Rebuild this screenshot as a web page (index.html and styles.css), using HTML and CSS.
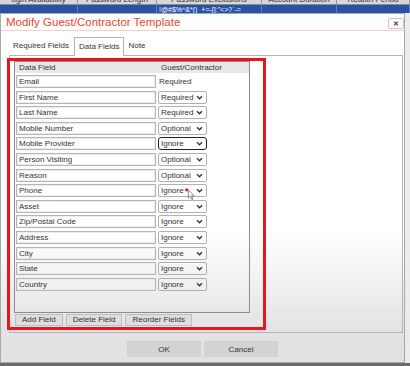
FILE: index.html
```html
<!DOCTYPE html>
<html lang="en">
<head>
    <meta charset="UTF-8">
    <title>Modify Guest/Contractor Template</title>
    <link rel="stylesheet" href="styles.css">
</head>
<body>
    <!-- Grid behind the dialog -->
    <div class="grid-strip">
        <div class="grid-head">
            <div class="col c1"><span>ogin Availability</span></div>
            <div class="col c2"><span>Password Length</span></div>
            <div class="col c3"><span>Password Exclusions</span></div>
            <div class="col c4"><span>Account Duration</span></div>
            <div class="col c5"><span>Reauth Period</span></div>
        </div>
        <div class="grid-row">
            <div class="col c1"></div>
            <div class="col c2"></div>
            <div class="col c3"><span>!@#$%^&amp;*()_+=-[]:"&lt;&gt;?`-=</span></div>
            <div class="col c4"></div>
            <div class="col c5"></div>
        </div>
    </div>

    <div class="dialog">
        <div class="dialog-title">
            <h1>Modify Guest/Contractor Template</h1>
            <button class="close-button">&#x2715;</button>
        </div>

        <div class="dialog-body">
            <div class="tabs">
                <div class="tab">Required Fields</div>
                <div class="tab active">Data Fields</div>
                <div class="tab">Note</div>
            </div>

            <div class="tab-panel">
                <div class="highlight">
                    <div class="field-list">
                        <div class="list-head">
                            <span class="head-name">Data Field</span>
                            <span class="head-mode">Guest/Contractor</span>
                        </div>
                        <div class="rows">
                            <div class="field-row">
                                <input class="field-name" type="text" value="Email">
                                <span class="fixed-mode">Required</span>
                            </div>
                            <div class="field-row">
                                <input class="field-name" type="text" value="First Name">
                                <div class="select">Required<svg class="chevron" viewBox="0 0 8 6"><path d="M1 1.5l3 3 3-3"/></svg></div>
                            </div>
                            <div class="field-row">
                                <input class="field-name" type="text" value="Last Name">
                                <div class="select">Required<svg class="chevron" viewBox="0 0 8 6"><path d="M1 1.5l3 3 3-3"/></svg></div>
                            </div>
                            <div class="field-row">
                                <input class="field-name" type="text" value="Mobile Number">
                                <div class="select">Optional<svg class="chevron" viewBox="0 0 8 6"><path d="M1 1.5l3 3 3-3"/></svg></div>
                            </div>
                            <div class="field-row">
                                <input class="field-name" type="text" value="Mobile Provider">
                                <div class="select focused">Ignore<svg class="chevron" viewBox="0 0 8 6"><path d="M1 1.5l3 3 3-3"/></svg></div>
                            </div>
                            <div class="field-row">
                                <input class="field-name" type="text" value="Person Visiting">
                                <div class="select">Optional<svg class="chevron" viewBox="0 0 8 6"><path d="M1 1.5l3 3 3-3"/></svg></div>
                            </div>
                            <div class="field-row">
                                <input class="field-name" type="text" value="Reason">
                                <div class="select">Optional<svg class="chevron" viewBox="0 0 8 6"><path d="M1 1.5l3 3 3-3"/></svg></div>
                            </div>
                            <div class="field-row">
                                <input class="field-name" type="text" value="Phone">
                                <div class="select">Ignore<svg class="chevron" viewBox="0 0 8 6"><path d="M1 1.5l3 3 3-3"/></svg>
                                    <!-- mouse pointer from the recording -->
                                    <svg class="pointer" viewBox="0 0 12 14">
                                        <circle cx="2" cy="2" r="2" fill="#e3202a"/>
                                        <path d="M4 2v10l2.4-2.3 1.8 4 1.4-.6-1.8-3.9H11z" fill="#ffffff" stroke="#555555" stroke-width=".8"/>
                                    </svg>
                                </div>
                            </div>
                            <div class="field-row">
                                <input class="field-name" type="text" value="Asset">
                                <div class="select">Ignore<svg class="chevron" viewBox="0 0 8 6"><path d="M1 1.5l3 3 3-3"/></svg></div>
                            </div>
                            <div class="field-row">
                                <input class="field-name" type="text" value="Zip/Postal Code">
                                <div class="select">Ignore<svg class="chevron" viewBox="0 0 8 6"><path d="M1 1.5l3 3 3-3"/></svg></div>
                            </div>
                            <div class="field-row">
                                <input class="field-name" type="text" value="Address">
                                <div class="select">Ignore<svg class="chevron" viewBox="0 0 8 6"><path d="M1 1.5l3 3 3-3"/></svg></div>
                            </div>
                            <div class="field-row">
                                <input class="field-name" type="text" value="City">
                                <div class="select">Ignore<svg class="chevron" viewBox="0 0 8 6"><path d="M1 1.5l3 3 3-3"/></svg></div>
                            </div>
                            <div class="field-row">
                                <input class="field-name" type="text" value="State">
                                <div class="select">Ignore<svg class="chevron" viewBox="0 0 8 6"><path d="M1 1.5l3 3 3-3"/></svg></div>
                            </div>
                            <div class="field-row">
                                <input class="field-name" type="text" value="Country">
                                <div class="select">Ignore<svg class="chevron" viewBox="0 0 8 6"><path d="M1 1.5l3 3 3-3"/></svg></div>
                            </div>
                        </div>
                    </div>

                    <div class="list-actions">
                        <button class="small-button">Add Field</button>
                        <button class="small-button">Delete Field</button>
                        <button class="small-button">Reorder Fields</button>
                    </div>
                </div>
            </div>
        </div>

        <div class="dialog-footer">
            <button class="footer-button">OK</button>
            <button class="footer-button">Cancel</button>
        </div>
    </div>

    <div class="page-bottom"></div>
</body>
</html>
```

FILE: styles.css
```css
body {
    margin: 0;
    width: 410px;
    height: 366px;
    overflow: hidden;
    background: #ececec;
    font-family: "Liberation Sans", Arial, sans-serif;
    color: #333333;
}

button,
input {
    font-family: "Liberation Sans", Arial, sans-serif;
}

/* Grid behind the dialog */
.grid-strip {
    height: 13px;
    overflow: hidden;
}

.grid-head,
.grid-row {
    display: flex;
    overflow: hidden;
}

.grid-head {
    height: 4px;
    background: #d7d7d7;
    border-bottom: 1px solid #8a8a8a;
    font-size: 8px;
}

.grid-row {
    height: 8px;
    background: #2753a6;
    color: #ffffff;
    font-size: 7px;
}

.col {
    flex: none;
    box-sizing: border-box;
    border-right: 1px solid #9a9a9a;
    white-space: nowrap;
    overflow: hidden;
}

.grid-row .col {
    border-right-color: #5b7cc0;
}

.grid-head span {
    display: block;
    margin-top: -5px;
    line-height: 9px;
    text-align: center;
}

.grid-row span {
    display: block;
    line-height: 8px;
    margin-top: 1px;
    padding-left: 2px;
}

.c1 { width: 78px; }
.c2 { width: 79px; }
.c3 { width: 105px; }
.c4 { width: 75px; }
.c5 { width: 73px; }

/* Dialog */
.dialog {
    width: 403px;
    height: 348px;
    border: 1px solid #a9a9a9;
    background: linear-gradient(#ffffff 0%, #ffffff 62%, #e3e3e3 91%, #e1e1e1 100%);
    display: flex;
    flex-direction: column;
}

.dialog-title {
    height: 16px;
    display: flex;
    align-items: center;
    justify-content: space-between;
    padding: 0 0 0 5px;
    border-bottom: 1px solid #f4d0c8;
}

.dialog-title h1 {
    margin: 0;
    font-size: 11.5px;
    font-weight: normal;
    color: #e4482f;
}

.close-button {
    width: 16px;
    height: 11px;
    margin-top: 2px;
    padding: 0;
    border: 1px solid #c9c9c9;
    border-radius: 2px;
    background: #fafafa;
    color: #444444;
    font-size: 7px;
    font-weight: bold;
    line-height: 9px;
}

.dialog-body {
    padding: 6px 1px 0 8px;
}

.tabs {
    display: flex;
    height: 18px;
    font-size: 8px;
}

.tab {
    box-sizing: border-box;
    height: 18px;
    padding: 0 4px;
    line-height: 18px;
    white-space: nowrap;
    color: #333333;
}

.tab:first-child {
    width: 65px;
}

.tab.active {
    height: 19px;
    border: 1px solid #b4b4b4;
    border-bottom: none;
    background: #ffffff;
    line-height: 17px;
    position: relative;
    z-index: 1;
}

.tab-panel {
    height: 274px;
    border: 1px solid #b4b4b4;
    padding-top: 2px;
}

/* Red annotation box */
.highlight {
    width: 253px;
    height: 266px;
    margin-left: -3px;
    border: 3px solid #e8161c;
}

.field-list {
    width: 234px;
    height: 250px;
    margin: 0 0 0 4px;
    border: 1px solid #8c8c8c;
    font-size: 8px;
}

.list-head {
    height: 11px;
    line-height: 11px;
    background: #e8e8e8;
    display: flex;
}

.head-name {
    width: 142px;
    padding-left: 4px;
}

.rows {
    display: flex;
    flex-direction: column;
    gap: 2.6px;
    padding: 2px 0 0 1px;
}

.field-row {
    display: grid;
    grid-template-columns: 140px 49px;
    column-gap: 2px;
    height: 13px;
}

.field-name {
    box-sizing: border-box;
    height: 13px;
    margin: 0;
    padding: 0 2px;
    border: 1px solid #b5b5b5;
    box-shadow: inset 0 0 0 1px #ececec;
    background: transparent;
    color: #333333;
    font-size: 8px;
}

.fixed-mode {
    line-height: 13px;
    padding-left: 1px;
}

.select {
    box-sizing: border-box;
    height: 13px;
    border: 1px solid #b0b0b0;
    border-radius: 2px;
    padding: 0 3px 0 2px;
    display: flex;
    align-items: center;
    justify-content: space-between;
    position: relative;
}

.chevron {
    width: 7px;
    height: 5px;
    fill: none;
    stroke: #333333;
    stroke-width: 1.6;
}

.pointer {
    position: absolute;
    left: 26px;
    top: 3px;
    width: 10px;
    height: 12px;
}

.select.focused {
    border-color: #222222;
    border-radius: 3px;
}

.list-actions {
    display: flex;
    gap: 3px;
    margin: 1px 0 0 5px;
}

.small-button {
    height: 12px;
    padding: 0 6px;
    border: 1px solid #bdbdbd;
    background: #dedede;
    color: #333333;
    font-size: 8px;
    line-height: 10px;
}

.dialog-footer {
    display: flex;
    justify-content: center;
    gap: 3px;
    margin-top: 8px;
}

.footer-button {
    width: 74px;
    height: 16px;
    border: none;
    background: #d3d3d3;
    color: #333333;
    font-size: 8px;
}

.page-bottom {
    height: 3px;
    background: #6b6b6b;
}
```
